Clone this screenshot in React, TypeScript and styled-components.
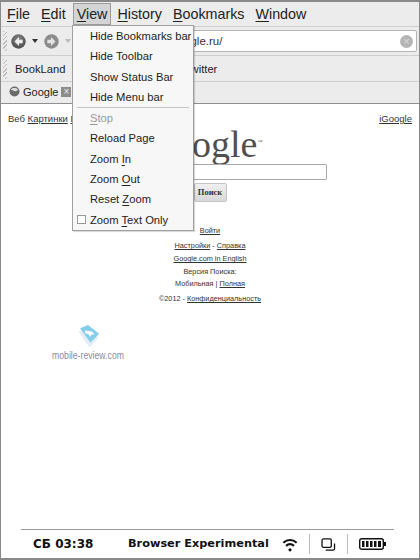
import styled, { createGlobalStyle } from "styled-components";

const GlobalStyle = createGlobalStyle`
  html, body { margin: 0; padding: 0; background: #fff; }
  body { font-family: "Liberation Sans", Arial, sans-serif; color: #222; }
  u { text-underline-offset: 2px; }
`;

const menus = [
  { label: "File", key: "F", rest: "ile" },
  { label: "Edit", key: "E", rest: "dit" },
  { label: "View", key: "V", rest: "iew", open: true },
  { label: "History", key: "H", rest: "istory" },
  { label: "Bookmarks", key: "B", rest: "ookmarks" },
  { label: "Window", key: "W", rest: "indow" },
];

const viewItems = [
  { pre: "Hide Bookmarks bar" },
  { pre: "Hide Toolbar" },
  { pre: "Show Status Bar" },
  { pre: "Hide Menu bar" },
  { separator: true },
  { pre: "", u: "S", post: "top", disabled: true },
  { pre: "Reload Page" },
  { pre: "Zoom ", u: "I", post: "n" },
  { pre: "Zoom ", u: "O", post: "ut" },
  { pre: "Reset ", u: "Z", post: "oom" },
  { pre: "Zoom ", u: "T", post: "ext Only", check: true },
];

const App = () => {
  return (
    <>
      <GlobalStyle />
      <Screen>
        <MenuBar>
          {menus.map((m) => (
            <MenuItem key={m.label} $open={m.open}>
              <u>{m.key}</u>
              {m.rest}
            </MenuItem>
          ))}
        </MenuBar>
        <ToolBar>
          <Grip />
          <NavButton>
            <svg width="15" height="15" viewBox="0 0 17 17">
              <defs>
                <radialGradient id="backFill" cx="0.5" cy="0.35" r="0.7">
                  <stop offset="0" stopColor="#8a8a8a" />
                  <stop offset="1" stopColor="#444" />
                </radialGradient>
              </defs>
              <circle cx="8.5" cy="8.5" r="8.2" fill="url(#backFill)" />
              <path d="M9 3.500 4 8.500l5 5v-3h4.200V6.500H9z" fill="#eee" />
            </svg>
          </NavButton>
          <Caret />
          <NavButton>
            <svg width="15" height="15" viewBox="0 0 17 17">
              <circle cx="8.5" cy="8.5" r="8.2" fill="#8c8c8c" />
              <path d="M8 3.500l5 5-5 5v-3H3.800V6.500H8z" fill="#e4e4e4" />
            </svg>
          </NavButton>
          <Caret $muted />
          <AddressBar>
            <AddressText>http://www.google.ru/</AddressText>
            <ClearButton>×</ClearButton>
          </AddressBar>
        </ToolBar>
        <BookmarkBar>
          <Grip />
          <Bookmark>BookLand</Bookmark>
          <TwitterLink>Twitter</TwitterLink>
        </BookmarkBar>
        <TabBar>
          <Tab>
            <svg width="11" height="11" viewBox="0 0 11 11">
              <circle cx="5.5" cy="5.5" r="5" fill="#6a6a6a" />
              <path d="M2 3.500c1.500-1.800 5-2 7 0-1 1.500-1.500 2-3.500 1.500S3 5 2 3.500z" fill="#ddd" />
            </svg>
            Google
            <TabClose>×</TabClose>
          </Tab>
        </TabBar>
        <Page>
          <TopLinks>
            <LeftLinks>
              Веб <PageLink>Картинки</PageLink> <PageLink>Видео</PageLink>
            </LeftLinks>
            <PageLink>iGoogle</PageLink>
          </TopLinks>
          <Logo>
            Google<Tm>™</Tm>
          </Logo>
          <SearchInput />
          <SearchButton>Поиск</SearchButton>
          <Login>
            <PageLink>Войти</PageLink>
          </Login>
          <FooterLine>
            <PageLink>Настройки</PageLink> - <PageLink>Справка</PageLink>
          </FooterLine>
          <FooterLine>
            <PageLink>Google.com in English</PageLink>
          </FooterLine>
          <FooterLine>Версия Поиска:</FooterLine>
          <FooterLine>
            Мобильная | <PageLink>Полная</PageLink>
          </FooterLine>
          <Copyright>
            ©2012 - <PageLink>Конфиденциальность</PageLink>
          </Copyright>
          <Watermark>
            <svg width="28" height="24" viewBox="0 0 34 30">
              <path d="M5 8 17 3l13 13-11 12z" fill="#e2eef7" />
              <path d="M7 4 17 0l14 11-11 11z" fill="#86cdec" />
              <path d="M13 7l9 1 3 4-4 0-1 3-3-4-3 0z" fill="#fff" />
            </svg>
            <WatermarkText>mobile-review.com</WatermarkText>
          </Watermark>
        </Page>
        <StatusBar>
          <Clock>СБ 03:38</Clock>
          <AppName>Browser Experimental</AppName>
          <StatusIcon>
            <svg width="16" height="15" viewBox="0 0 18 16" fill="none" stroke="#111" strokeWidth="2.400">
              <path d="M1.500 6c4.500-4 10.500-4 15 0" />
              <path d="M4.500 9.500c2.800-2.300 6.200-2.300 9 0" />
              <circle cx="9" cy="14" r="1.800" fill="#111" stroke="none" />
            </svg>
          </StatusIcon>
          <StatusIcon $divider>
            <svg width="15" height="13" viewBox="0 0 16 14" fill="none" stroke="#111" strokeWidth="1.400">
              <rect x="1" y="1" width="10" height="9" rx="1.500" />
              <path d="M5 13h8a1.500 1.500 0 0 0 1.500-1.500V6" />
            </svg>
          </StatusIcon>
          <StatusIcon $divider>
            <svg width="27" height="12" viewBox="0 0 27 12">
              <rect x="0.700" y="0.700" width="23.600" height="10.600" rx="2" fill="none" stroke="#111" strokeWidth="1.400" />
              <path d="M3 3h2.500v6H3zM7 3h2.500v6H7zM11 3h2.500v6H11zM15 3h2.500v6H15zM19 3h3v6h-3zM25 4h2v4h-2z" fill="#111" />
            </svg>
          </StatusIcon>
        </StatusBar>
        <ViewMenu>
          {viewItems.map((item, i) =>
            item.separator ? (
              <Separator key={i} />
            ) : (
              <DropItem key={i} $disabled={item.disabled}>
                {item.check && <CheckBox />}
                {item.pre}
                {item.u && <u>{item.u}</u>}
                {item.post}
              </DropItem>
            )
          )}
        </ViewMenu>
      </Screen>
    </>
  );
};

export default App;

const Screen = styled.div`
  position: relative;
  box-sizing: border-box;
  width: 420px;
  height: 560px;
  display: flex;
  flex-direction: column;
  overflow: hidden;
  background: #fff;
  border: 1px solid #8a8a8a;
  border-bottom-width: 2px;
  border-top-width: 2px;
`;

const MenuBar = styled.div`
  height: 24px;
  display: flex;
  align-items: center;
  padding-left: 1px;
  background: #ececec;
  border-bottom: 1px solid #cfcfcf;
  font-size: 14.3px;
`;

const MenuItem = styled.div<{ $open?: boolean }>`
  height: 22px;
  line-height: 22px;
  padding: 0 5px;
  margin-right: 1px;
  color: #222;
  box-sizing: border-box;
  ${(p) => p.$open && "background: #d4d4d4; border: 1px solid #9c9c9c; line-height: 20px; padding: 0 3px; margin: 0 1px 0 1px;"}
`;

const ToolBar = styled.div`
  height: 28px;
  display: flex;
  align-items: center;
  background: #ececec;
  border-bottom: 1px solid #cfcfcf;
`;

const Grip = styled.div`
  width: 4px;
  height: 20px;
  margin: 0 4px 0 2px;
  background: repeating-linear-gradient(135deg, #bbb 0 1px, transparent 1px 3px);
`;

const NavButton = styled.div`
  width: 15px;
  height: 15px;
  display: flex;
`;

const Caret = styled.div<{ $muted?: boolean }>`
  width: 0;
  height: 0;
  margin: 0 6px 0 6px;
  border-left: 3px solid transparent;
  border-right: 3px solid transparent;
  border-top: 4px solid ${(p) => (p.$muted ? "#bbb" : "#333")};
`;

const AddressBar = styled.div`
  flex: 1;
  height: 20px;
  margin: 0 2px 0 32px;
  display: flex;
  align-items: center;
  justify-content: space-between;
  padding: 0 3px 0 5px;
  background: #fff;
  border: 1px solid #b4b4b4;
  border-radius: 2px;
`;

const AddressText = styled.span`
  font-size: 11.5px;
  color: #333;
`;

const ClearButton = styled.span`
  width: 13px;
  height: 13px;
  border-radius: 50%;
  background: #b5b5b5;
  color: #ddd;
  font-size: 11px;
  line-height: 13px;
  text-align: center;
`;

const BookmarkBar = styled.div`
  height: 25px;
  display: flex;
  align-items: center;
  background: #ececec;
  border-bottom: 1px solid #cfcfcf;
  font-size: 11.2px;
`;

const Bookmark = styled.span`
  margin-left: 4px;
`;

const TwitterLink = styled.span`
  margin-left: 119px;
`;

const TabBar = styled.div`
  height: 21px;
  display: flex;
  background: #ececec;
  border-bottom: 1px solid #8f8f8f;
`;

const Tab = styled.div`
  display: flex;
  align-items: center;
  gap: 3px;
  padding: 0 0 2px 8px;
  font-size: 11px;
`;

const TabClose = styled.span`
  width: 10px;
  height: 10px;
  margin-left: 0;
  background: #8c8c8c;
  color: #eee;
  font-size: 10px;
  line-height: 10px;
  text-align: center;
`;

const Page = styled.div`
  flex: 1;
  display: flex;
  flex-direction: column;
  align-items: center;
  background: #fff;
  font-size: 7.3px;
  color: #333;
`;

const TopLinks = styled.div`
  align-self: stretch;
  display: flex;
  justify-content: space-between;
  padding: 9px 7px 0 7px;
  font-size: 9.5px;
  line-height: 11px;
`;

const LeftLinks = styled.span``;

const PageLink = styled.span`
  text-decoration: underline;
`;

const Logo = styled.div`
  margin-right: 12px;
  font-family: "Liberation Serif", serif;
  font-size: 38px;
  line-height: 36px;
  color: #4f4f4f;
`;

const Tm = styled.sup`
  font-size: 5px;
`;

const SearchInput = styled.div`
  box-sizing: border-box;
  width: 190px;
  height: 16px;
  margin: 2px 0 0 43px;
  border: 1px solid #aaa;
  border-radius: 1px;
`;

const SearchButton = styled.div`
  box-sizing: border-box;
  width: 33px;
  height: 19px;
  margin-top: 3px;
  font-family: "Liberation Serif", serif;
  font-weight: bold;
  font-size: 8.5px;
  line-height: 17px;
  text-align: center;
  color: #333;
  background: linear-gradient(#f0f0f0, #d8d8d8);
  border: 1px solid #c4c4c4;
  border-radius: 2px;
`;

const Login = styled.div`
  margin: 24px 0 3px;
  line-height: 10px;
`;

const FooterLine = styled.div`
  margin-top: 2.700px;
  line-height: 10px;
`;

const Copyright = styled.div`
  margin-top: 5px;
  line-height: 10px;
`;

const Watermark = styled.div`
  align-self: flex-start;
  width: 72px;
  margin: 21px 0 0 51px;
  display: flex;
  flex-direction: column;
  align-items: center;
`;

const WatermarkText = styled.span`
  align-self: flex-start;
  font-size: 11px;
  line-height: 13px;
  white-space: nowrap;
  color: #8a8aac;
  transform: scaleX(0.79);
  transform-origin: left center;
`;

const StatusBar = styled.div`
  height: 28px;
  margin: 0 25px 0 20px;
  display: flex;
  align-items: center;
  border-top: 1px solid #999;
  font-family: "DejaVu Sans", sans-serif;
  font-weight: bold;
  color: #111;
`;

const Clock = styled.span`
  flex: none;
  width: 95px;
  margin-left: 12px;
  font-size: 12px;
`;

const AppName = styled.span`
  flex: none;
  width: 143px;
  margin-top: -2px;
  font-size: 11.3px;
`;

const StatusIcon = styled.div<{ $divider?: boolean }>`
  flex: none;
  height: 20px;
  display: flex;
  align-items: center;
  padding: 0 11px;
  ${(p) => p.$divider && "border-left: 1px solid #bbb;"}
`;

const ViewMenu = styled.div`
  position: absolute;
  left: 71px;
  top: 23px;
  box-sizing: border-box;
  width: 122px;
  background: #f7f7f7;
  border: 1px solid #a0a0a0;
  box-shadow: 1px 1px 1px rgba(0, 0, 0, 0.15);
  font-size: 11.2px;
  color: #222;
`;

const DropItem = styled.div<{ $disabled?: boolean }>`
  position: relative;
  height: 20.300px;
  line-height: 20.300px;
  padding-left: 17px;
  white-space: nowrap;
  color: ${(p) => (p.$disabled ? "#999" : "#222")};
`;

const CheckBox = styled.span`
  position: absolute;
  left: 4px;
  top: 5px;
  box-sizing: border-box;
  width: 9px;
  height: 9px;
  background: #fff;
  border: 1px solid #999;
`;

const Separator = styled.div`
  height: 1px;
  margin: 0 4px;
  background: #c4c4c4;
`;
